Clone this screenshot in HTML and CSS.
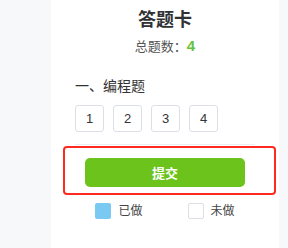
FILE: index.html
```html
<!DOCTYPE html>
<html lang="zh">
<head>
<meta charset="utf-8">
<title>答题卡</title>
<link rel="stylesheet" href="styles.css">
</head>
<body>
<div class="panel">
  <div class="title">答题卡</div>
  <div class="total">总题数：<span class="count">4</span></div>
  <div class="section">
    <div class="section-name">一、编程题</div>
    <div class="boxes">
      <div class="box">1</div>
      <div class="box">2</div>
      <div class="box">3</div>
      <div class="box">4</div>
    </div>
  </div>
  <div class="submit-area">
    <button class="submit">提交</button>
  </div>
  <div class="legend">
    <div class="legend-item"><span class="swatch done"></span><span>已做</span></div>
    <div class="legend-item"><span class="swatch todo"></span><span>未做</span></div>
  </div>
</div>
</body>
</html>
```
FILE: styles.css
```css
html, body {
  margin: 0;
  padding: 0;
  background: #f7f8fa;
  font-family: "Liberation Sans", "Noto Sans CJK SC", sans-serif;
  color: #333;
}
.panel {
  margin-left: 51px;
  width: 228px;
  min-height: 248px;
  background: #fff;
  padding: 8px 24px 0;
  box-sizing: border-box;
}
.title {
  text-align: center;
  font-size: 18px;
  line-height: 24px;
  font-weight: bold;
  color: #303133;
}
.total {
  margin-top: 4px;
  text-align: center;
  font-size: 13px;
  line-height: 20px;
  color: #555;
}
.count {
  color: #67c23a;
  font-weight: bold;
  font-size: 15px;
}
.section {
  margin-top: 19px;
  padding-bottom: 12px;
  border-bottom: 1px solid #ebeef5;
}
.section-name {
  font-size: 14px;
  line-height: 20px;
  color: #333;
}
.boxes {
  margin-top: 9px;
  display: flex;
  gap: 9px;
}
.box {
  width: 29px;
  height: 27px;
  box-sizing: border-box;
  border: 1px solid #dcdfe6;
  border-radius: 3px;
  display: flex;
  align-items: center;
  justify-content: center;
  font-size: 13px;
  color: #333;
}
.submit-area {
  margin: 1px 0 0 -12px;
  width: 213px;
  height: 49px;
  box-sizing: border-box;
  border: 2px solid #ff2a1f;
  border-radius: 4px;
  padding: 10px 0 0 20px;
}
.submit {
  display: block;
  width: 160px;
  height: 29px;
  border: none;
  border-radius: 5px;
  background: #6cc31c;
  color: #fff;
  font-family: "Liberation Sans", "Noto Sans CJK SC", sans-serif;
  font-size: 13px;
  font-weight: bold;
  padding: 0;
}
.legend {
  margin-top: 8px;
  display: flex;
  justify-content: center;
  gap: 45px;
}
.legend-item {
  display: flex;
  align-items: center;
  gap: 7px;
  font-size: 12px;
  line-height: 16px;
  color: #444;
}
.swatch {
  width: 16px;
  height: 16px;
  box-sizing: border-box;
  border-radius: 2px;
}
.swatch.done {
  background: #7ac9f2;
}
.swatch.todo {
  border: 1px solid #dcdfe6;
  background: #fff;
}
```
